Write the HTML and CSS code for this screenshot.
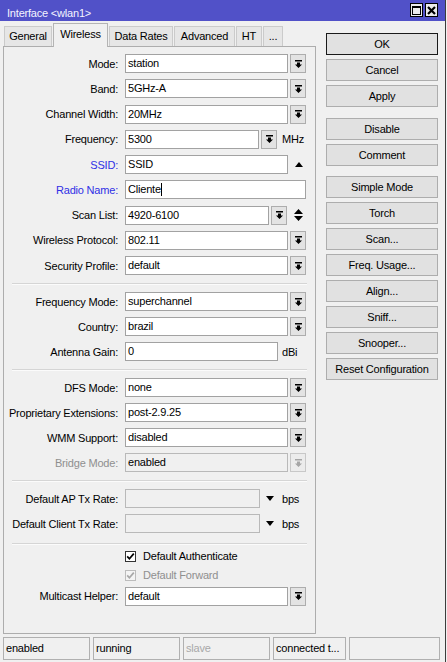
FILE: index.html
```html
<!DOCTYPE html>
<html lang="en">
<head>
  <meta charset="UTF-8" />
  <title>Interface &lt;wlan1&gt;</title>
  <link rel="stylesheet" href="styles.css">
</head>
<body>
<div class="window">

  <div class="titlebar">
    <span class="title">Interface &lt;wlan1&gt;</span>
    <div class="title-btns">
      <span class="tbtn"><span class="max-icon"></span></span>
      <span class="tbtn">
        <svg width="9" height="9" viewBox="0 0 9 9"><path d="M1 1L8 8M8 1L1 8" stroke="#000" stroke-width="2.2"/></svg>
      </span>
    </div>
  </div>

  <div class="main">
    <div class="left">
      <div class="tabs">
        <span class="tab w-general">General</span>
        <span class="tab active w-wireless">Wireless</span>
        <span class="tab w-rates">Data Rates</span>
        <span class="tab w-adv">Advanced</span>
        <span class="tab w-ht">HT</span>
        <span class="tab w-more">...</span>
      </div>

      <div class="panel">
        <!-- основной блок -->
        <div class="group first">
          <div class="row">
            <label>Mode:</label>
            <div class="field f-sel">station</div>
            <span class="dd"><svg width="7" height="8" viewBox="0 0 7 8"><path d="M0 0h7v1.4H0zM2 2.4h3v2H7L3.5 8 0 4.4h2z"/></svg></span>
          </div>
          <div class="row">
            <label>Band:</label>
            <div class="field f-sel">5GHz-A</div>
            <span class="dd"><svg width="7" height="8" viewBox="0 0 7 8"><path d="M0 0h7v1.4H0zM2 2.4h3v2H7L3.5 8 0 4.4h2z"/></svg></span>
          </div>
          <div class="row">
            <label>Channel Width:</label>
            <div class="field f-sel">20MHz</div>
            <span class="dd"><svg width="7" height="8" viewBox="0 0 7 8"><path d="M0 0h7v1.4H0zM2 2.4h3v2H7L3.5 8 0 4.4h2z"/></svg></span>
          </div>
          <div class="row">
            <label>Frequency:</label>
            <div class="field f-freq">5300</div>
            <span class="dd"><svg width="7" height="8" viewBox="0 0 7 8"><path d="M0 0h7v1.4H0zM2 2.4h3v2H7L3.5 8 0 4.4h2z"/></svg></span>
            <span class="unit u-mhz">MHz</span>
          </div>
          <div class="row">
            <label class="blue">SSID:</label>
            <div class="field f-sel">SSID</div>
            <svg class="arrow-up" width="8" height="5" viewBox="0 0 8 5"><path d="M0 5L4 0 8 5z"/></svg>
          </div>
          <div class="row">
            <label class="blue">Radio Name:</label>
            <div class="field f-full">Cliente<span class="caret"></span></div>
          </div>
          <div class="row">
            <label>Scan List:</label>
            <div class="field f-scan">4920-6100</div>
            <span class="dd"><svg width="7" height="8" viewBox="0 0 7 8"><path d="M0 0h7v1.4H0zM2 2.4h3v2H7L3.5 8 0 4.4h2z"/></svg></span>
            <svg class="updown" width="9" height="12" viewBox="0 0 9 12"><path d="M0 5L4.5 0 9 5zM0 7h9L4.5 12z"/></svg>
          </div>
          <div class="row">
            <label>Wireless Protocol:</label>
            <div class="field f-sel">802.11</div>
            <span class="dd"><svg width="7" height="8" viewBox="0 0 7 8"><path d="M0 0h7v1.4H0zM2 2.4h3v2H7L3.5 8 0 4.4h2z"/></svg></span>
          </div>
          <div class="row">
            <label>Security Profile:</label>
            <div class="field f-sel">default</div>
            <span class="dd"><svg width="7" height="8" viewBox="0 0 7 8"><path d="M0 0h7v1.4H0zM2 2.4h3v2H7L3.5 8 0 4.4h2z"/></svg></span>
          </div>
        </div>

        <div class="sep"></div>

        <div class="group">
          <div class="row">
            <label>Frequency Mode:</label>
            <div class="field f-sel">superchannel</div>
            <span class="dd"><svg width="7" height="8" viewBox="0 0 7 8"><path d="M0 0h7v1.4H0zM2 2.4h3v2H7L3.5 8 0 4.4h2z"/></svg></span>
          </div>
          <div class="row">
            <label>Country:</label>
            <div class="field f-sel">brazil</div>
            <span class="dd"><svg width="7" height="8" viewBox="0 0 7 8"><path d="M0 0h7v1.4H0zM2 2.4h3v2H7L3.5 8 0 4.4h2z"/></svg></span>
          </div>
          <div class="row">
            <label>Antenna Gain:</label>
            <div class="field f-gain">0</div>
            <span class="unit u-dbi">dBi</span>
          </div>
        </div>

        <div class="sep"></div>

        <div class="group">
          <div class="row">
            <label>DFS Mode:</label>
            <div class="field f-sel">none</div>
            <span class="dd"><svg width="7" height="8" viewBox="0 0 7 8"><path d="M0 0h7v1.4H0zM2 2.4h3v2H7L3.5 8 0 4.4h2z"/></svg></span>
          </div>
          <div class="row">
            <label>Proprietary Extensions:</label>
            <div class="field f-sel">post-2.9.25</div>
            <span class="dd"><svg width="7" height="8" viewBox="0 0 7 8"><path d="M0 0h7v1.4H0zM2 2.4h3v2H7L3.5 8 0 4.4h2z"/></svg></span>
          </div>
          <div class="row">
            <label>WMM Support:</label>
            <div class="field f-sel">disabled</div>
            <span class="dd"><svg width="7" height="8" viewBox="0 0 7 8"><path d="M0 0h7v1.4H0zM2 2.4h3v2H7L3.5 8 0 4.4h2z"/></svg></span>
          </div>
          <div class="row">
            <label class="gray">Bridge Mode:</label>
            <div class="field f-sel off">enabled</div>
            <span class="dd off"><svg width="7" height="8" viewBox="0 0 7 8"><path d="M0 0h7v1.4H0zM2 2.4h3v2H7L3.5 8 0 4.4h2z"/></svg></span>
          </div>
        </div>

        <div class="sep"></div>

        <div class="group">
          <div class="row">
            <label>Default AP Tx Rate:</label>
            <div class="field f-rate off"></div>
            <svg class="arrow-down" width="8" height="5" viewBox="0 0 8 5"><path d="M0 0h8L4 5z"/></svg>
            <span class="unit u-bps">bps</span>
          </div>
          <div class="row">
            <label>Default Client Tx Rate:</label>
            <div class="field f-rate off"></div>
            <svg class="arrow-down" width="8" height="5" viewBox="0 0 8 5"><path d="M0 0h8L4 5z"/></svg>
            <span class="unit u-bps">bps</span>
          </div>
        </div>

        <div class="sep sep-last"></div>

        <div class="check-row">
          <span class="box"><svg width="9" height="9" viewBox="0 0 9 9"><path d="M1.2 4.4L3.4 6.8 7.8 1.6" fill="none" stroke="#000" stroke-width="1.7"/></svg></span>
          <span>Default Authenticate</span>
        </div>
        <div class="check-row disabled">
          <span class="box"><svg width="9" height="9" viewBox="0 0 9 9"><path d="M1.2 4.4L3.4 6.8 7.8 1.6" fill="none" stroke="#a8a8a8" stroke-width="1.7"/></svg></span>
          <span>Default Forward</span>
        </div>
        <div class="row multicast">
          <label>Multicast Helper:</label>
          <div class="field f-sel">default</div>
          <span class="dd"><svg width="7" height="8" viewBox="0 0 7 8"><path d="M0 0h7v1.4H0zM2 2.4h3v2H7L3.5 8 0 4.4h2z"/></svg></span>
        </div>
      </div>
    </div>

    <div class="side">
      <div class="btn-group">
        <button class="default">OK</button>
        <button>Cancel</button>
        <button>Apply</button>
      </div>
      <div class="btn-group">
        <button>Disable</button>
        <button>Comment</button>
      </div>
      <div class="btn-group">
        <button>Simple Mode</button>
        <button>Torch</button>
        <button>Scan...</button>
        <button>Freq. Usage...</button>
        <button>Align...</button>
        <button>Sniff...</button>
        <button>Snooper...</button>
        <button>Reset Configuration</button>
      </div>
    </div>
  </div>

  <div class="status">
    <span class="cell c1">enabled</span>
    <span class="cell c2">running</span>
    <span class="cell c3 gray">slave</span>
    <span class="cell c4">connected t...</span>
    <span class="cell c5"></span>
  </div>
</div>
</body>
</html>
```

FILE: styles.css
```css
* {
  box-sizing: border-box;
}

html, body {
  margin: 0;
}

body {
  background: #f0f0f0;
  font-family: "Liberation Sans", Arial, sans-serif;
  font-size: 11px;
  letter-spacing: -0.2px;
  color: #000;
}

.window {
  width: 446px;
  height: 662px;
  border-right: 1px solid #3c3c3c;
  background: #f0f0f0;
}

/* заголовок окна */
.titlebar {
  height: 21px;
  background: #5151c8;
  display: flex;
  justify-content: space-between;
  align-items: flex-start;
  padding: 0 7px 0 7px;
}

.title {
  color: #f4f4ff;
  line-height: 13px;
  margin-top: 7px;
}

.title-btns {
  display: flex;
  gap: 2px;
  margin-top: 3px;
}

.tbtn {
  width: 13px;
  height: 14px;
  border: 1px solid #000;
  background: #ececec;
  display: flex;
  align-items: center;
  justify-content: center;
}

.max-icon {
  width: 9px;
  height: 9px;
  border: 1px solid #000;
  border-top-width: 2px;
}

.main {
  display: flex;
  align-items: flex-start;
}

.left {
  width: 316px;
  padding-left: 3px;
}

/* вкладки */
.tabs {
  display: flex;
  align-items: flex-end;
  height: 23px;
  margin-top: 2px;
  padding-left: 1px;
}

.tab {
  height: 20px;
  line-height: 19px;
  text-align: center;
  background: #e6e6e6;
  border: 1px solid #cbcbcb;
  border-bottom: none;
  margin-right: 1px;
}

.tab.active {
  height: 23px;
  line-height: 20px;
  background: #f0f0f0;
  border-color: #b4b4b4;
  position: relative;
  margin-bottom: -1px;
  height: 24px;
  z-index: 1;
}

.w-general { width: 48px; }
.w-wireless { width: 55px; }
.w-rates { width: 64px; }
.w-adv { width: 61px; }
.w-ht { width: 26px; }
.w-more { width: 20px; }

.panel {
  width: 313px;
  height: 588px;
  border: 1px solid #adadad;
  padding-top: 7px;
}

.group {
  display: flex;
  flex-direction: column;
  gap: 6px;
}

.group.first {
  gap: 6.25px;
}

.row {
  display: flex;
  align-items: center;
  height: 19px;
}

.row label {
  width: 121px;
  padding-right: 7px;
  text-align: right;
  white-space: nowrap;
}

.blue {
  color: #2f2fe6;
}

.gray {
  color: #8f8f8f;
}

.field {
  height: 19px;
  line-height: 17px;
  background: #fff;
  border: 1px solid #a2a2a2;
  padding-left: 2px;
  white-space: nowrap;
}

.field.off {
  background: #f0f0f0;
  border-color: #b9b9b9;
}

.f-sel { width: 163px; }
.f-full { width: 181px; }
.f-freq { width: 134px; }
.f-scan { width: 144px; }
.f-gain { width: 153px; }
.f-rate { width: 135px; }

.caret {
  display: inline-block;
  width: 1px;
  height: 13px;
  background: #000;
  vertical-align: -3px;
}

.dd {
  width: 16px;
  height: 19px;
  margin-left: 2px;
  border: 1px solid #adadad;
  background: #e3e3e3;
  display: flex;
  align-items: center;
  justify-content: center;
}

.dd.off {
  border-color: #c8c8c8;
  background: #ececec;
}

.dd.off svg {
  fill: #a6a6a6;
}

.unit {
  white-space: nowrap;
}

.u-mhz { margin-left: 5px; }
.u-dbi { margin-left: 4px; }
.u-bps { margin-left: 8px; }

.arrow-up {
  margin-left: 7px;
}

.updown {
  margin-left: 7px;
}

.arrow-down {
  margin-left: 6px;
}

.sep {
  border-top: 1px solid #d5d5d5;
  border-bottom: 1px solid #fbfbfb;
  margin: 7.5px 8px 7.5px 8px;
}

.sep.sep-last {
  margin-top: 10px;
  margin-bottom: 3px;
}

/* флажки */
.check-row {
  display: flex;
  align-items: center;
  height: 16px;
  padding-left: 121px;
  margin-bottom: 3.4px;
}

.check-row .box {
  width: 11px;
  height: 11px;
  border: 1px solid #333;
  background: #fff;
  margin-right: 7px;
  display: flex;
  align-items: center;
  justify-content: center;
}

.check-row.disabled {
  color: #8f8f8f;
}

.check-row.disabled .box {
  border-color: #bcbcbc;
  background: #f4f4f4;
}

.row.multicast {
  margin-top: 1.5px;
}

/* кнопки справа */
.side {
  width: 112px;
  margin-left: 10px;
  margin-top: 12px;
}

.btn-group {
  display: flex;
  flex-direction: column;
  gap: 4px;
  margin-bottom: 10.5px;
}

.side button {
  height: 22px;
  width: 112px;
  background: #e1e1e1;
  border: 1px solid #adadad;
  font-family: "Liberation Sans", Arial, sans-serif;
  font-size: 11px;
  letter-spacing: -0.2px;
  color: #000;
  padding: 0;
}

.side button.default {
  border: 1px solid #1a1a1a;
}

/* строка состояния */
.status {
  display: flex;
  gap: 3px;
  margin-top: 3px;
  padding-left: 3px;
}

.cell {
  height: 23px;
  line-height: 21px;
  border: 1px solid #b0b0b0;
  padding-left: 2px;
  white-space: nowrap;
  overflow: hidden;
}

.c1, .c2, .c3 { width: 87px; }
.c4 { width: 73px; }
.c5 { width: 91px; }

.cell.gray {
  color: #a8a8a8;
}
```
